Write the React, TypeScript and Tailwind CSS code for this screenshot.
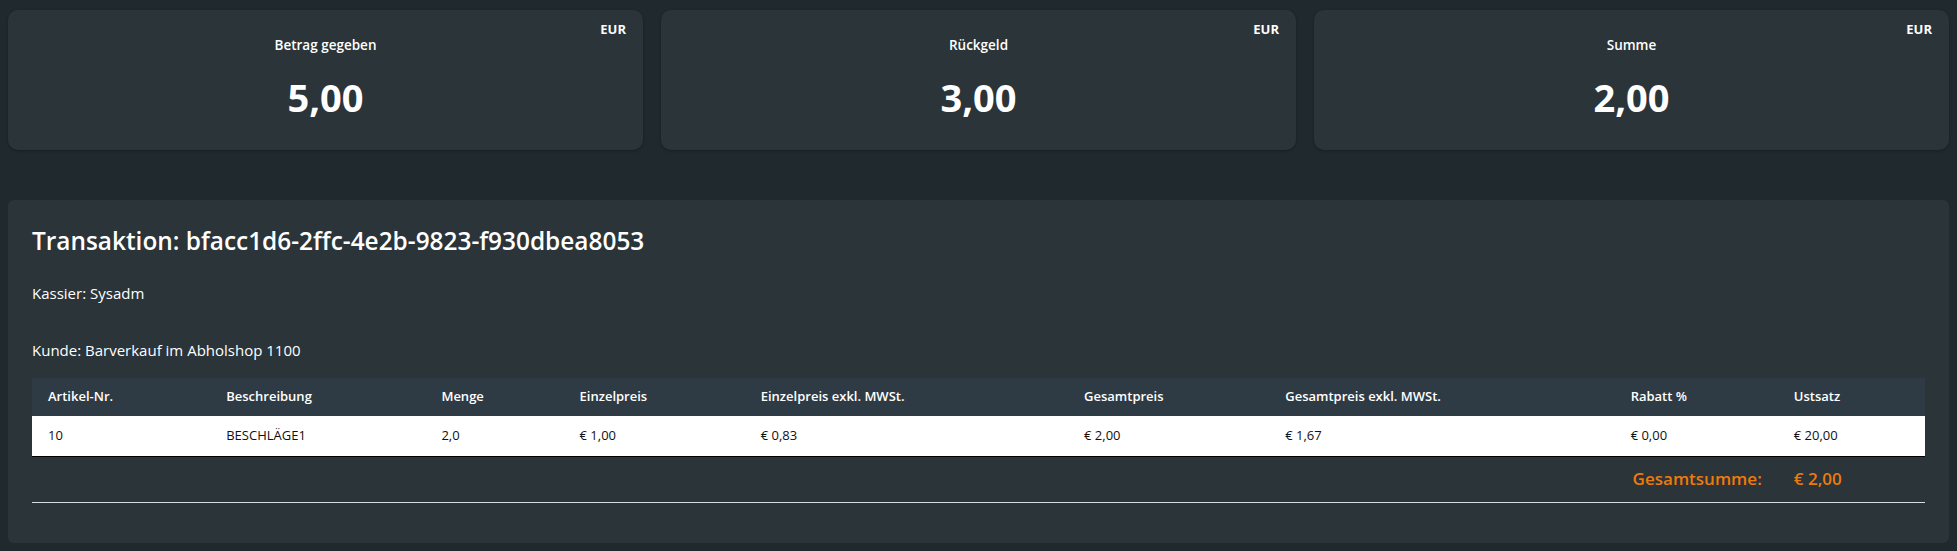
const cards = [
  { label: "Betrag gegeben", value: "5,00" },
  { label: "Rückgeld", value: "3,00" },
  { label: "Summe", value: "2,00" },
];

const columns = [
  { label: "Artikel-Nr.", width: "w-[178px]" },
  { label: "Beschreibung", width: "w-[215px]" },
  { label: "Menge", width: "w-[138px]" },
  { label: "Einzelpreis", width: "w-[181px]" },
  { label: "Einzelpreis exkl. MWSt.", width: "w-[323px]" },
  { label: "Gesamtpreis", width: "w-[201px]" },
  { label: "Gesamtpreis exkl. MWSt.", width: "w-[345px]" },
  { label: "Rabatt %", width: "w-[163px]" },
  { label: "Ustsatz", width: "w-[147px]" },
];

const rows = [["10", "BESCHLÄGE1", "2,0", "€ 1,00", "€ 0,83", "€ 2,00", "€ 1,67", "€ 0,00", "€ 20,00"]];

function AmountCard({ label, value }: { label: string; value: string }) {
  return (
    <div className="h-[140px] rounded-[10px] bg-[#2a3439] shadow-[0_1px_3px_rgba(0,0,0,0.25)] px-[17px] pt-[11px] flex flex-col text-white">
      <div className="flex justify-end text-[13px] font-bold leading-[16px]">EUR</div>
      <div className="text-center text-[13.5px] font-semibold leading-[16px]">{label}</div>
      <div className="mt-[21px] text-center text-[38px] font-bold leading-[46px]">{value}</div>
    </div>
  );
}

export default function App() {
  return (
    <div
      className="min-h-[551px] w-full bg-[#20292d] px-2 pt-[10px] pb-2"
      style={{ fontFamily: '"Open Sans", "Noto Sans", Arial, sans-serif' }}
    >
      <div className="grid grid-cols-3 gap-[18px]">
        {cards.map((c) => (
          <AmountCard key={c.label} label={c.label} value={c.value} />
        ))}
      </div>

      <section className="mt-[50px] rounded-[6px] bg-[#2a3439] px-6 pt-[25px] pb-[40px] text-white">
        <h2 className="text-[24.4px] font-semibold leading-[32px]">
          Transaktion: bfacc1d6-2ffc-4e2b-9823-f930dbea8053
        </h2>
        <p className="mt-[25px] text-[15px] leading-[22px]">Kassier: Sysadm</p>
        <p className="mt-[35px] text-[15px] leading-[22px]">Kunde: Barverkauf im Abholshop 1100</p>

        <table className="mt-[17px] w-full table-fixed border-collapse text-[13px]">
          <colgroup>
            {columns.map((c) => (
              <col key={c.label} className={c.width} />
            ))}
          </colgroup>
          <thead>
            <tr className="h-[38px] bg-[#2f3b44]">
              {columns.map((c) => (
                <th key={c.label} className="px-4 text-left font-semibold text-white">
                  {c.label}
                </th>
              ))}
            </tr>
          </thead>
          <tbody>
            {rows.map((r, i) => (
              <tr key={i} className="h-[40px] border-b border-black bg-white text-[#111]">
                {r.map((cell, j) => (
                  <td key={j} className="px-4">
                    {cell}
                  </td>
                ))}
              </tr>
            ))}
          </tbody>
          <tfoot>
            <tr className="h-[46px] border-b border-[#d8dde0] text-[17px] font-semibold text-[#ee7a0c]">
              <td colSpan={7}></td>
              <td className="px-4 text-right">Gesamtsumme:</td>
              <td className="px-4">€ 2,00</td>
            </tr>
          </tfoot>
        </table>
      </section>
    </div>
  );
}
